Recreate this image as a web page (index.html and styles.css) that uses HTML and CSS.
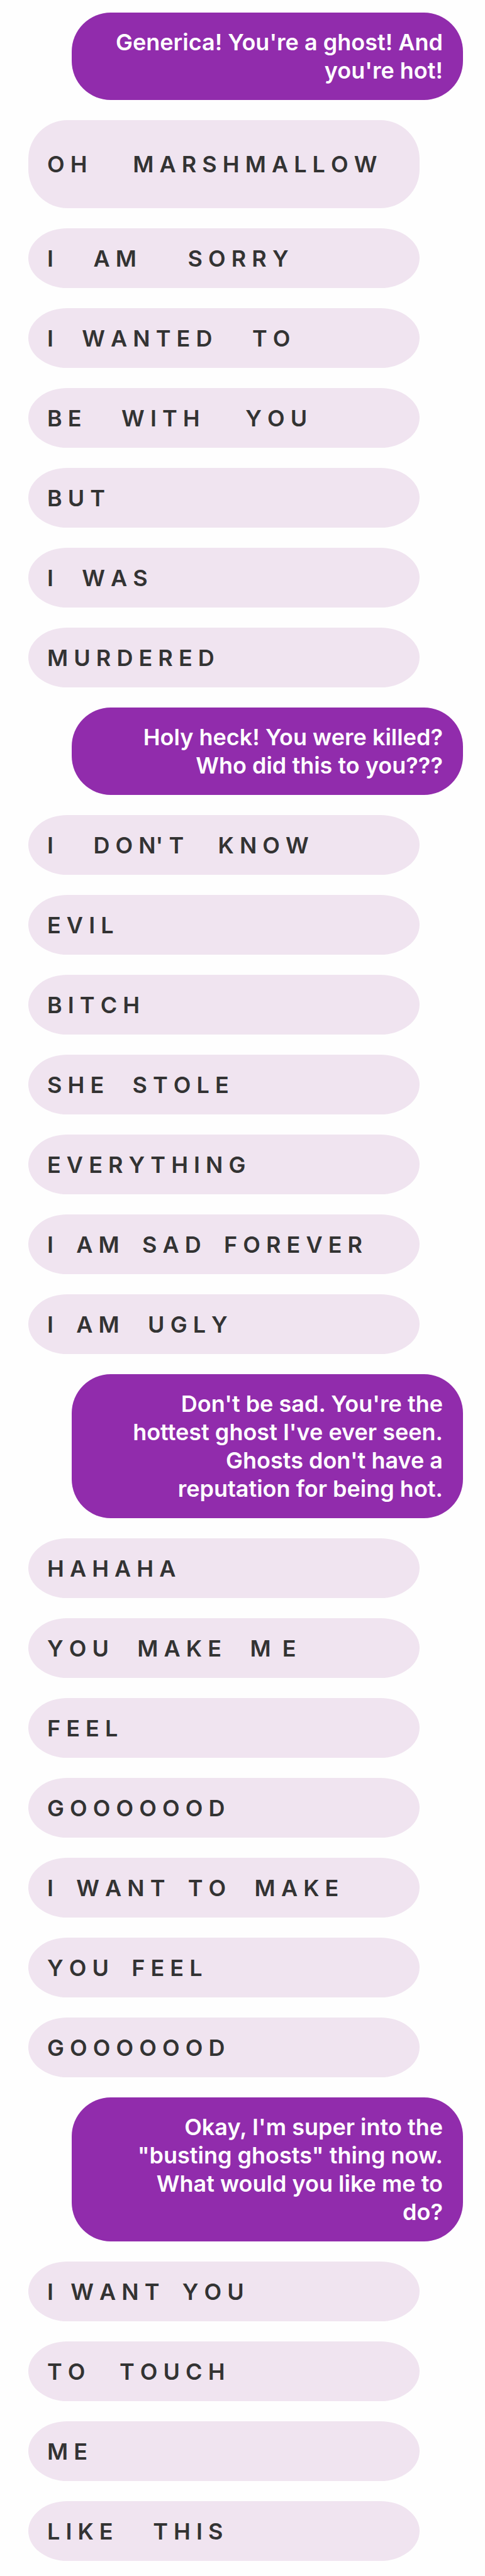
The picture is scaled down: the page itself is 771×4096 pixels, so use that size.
FILE: index.html
```html
<!DOCTYPE html>
<html lang="en">
<head>
<meta charset="utf-8">
<meta name="viewport" content="width=device-width, initial-scale=1">
<title>Chat</title>
<link rel="stylesheet" href="styles.css">
</head>
<body>
<main class="chat">
<p class="message sent">Generica! You're a ghost! And you're hot!</p>
<p class="message received tall">O H        M A R S H M A L L O W</p>
<p class="message received">I       A M         S O R R Y</p>
<p class="message received">I     W A N T E D       T O</p>
<p class="message received">B E       W I T H        Y O U</p>
<p class="message received">B U T</p>
<p class="message received">I     W A S</p>
<p class="message received">M U R D E R E D</p>
<p class="message sent">Holy heck! You were killed?<br>Who did this to you???</p>
<p class="message received">I       D O N' T      K N O W</p>
<p class="message received">E V I L</p>
<p class="message received">B I T C H</p>
<p class="message received">S H E     S T O L E</p>
<p class="message received">E V E R Y T H I N G</p>
<p class="message received">I    A M    S A D    F O R E V E R</p>
<p class="message received">I    A M     U G L Y</p>
<p class="message sent">Don't be sad. You're the<br>hottest ghost I've ever seen.<br>Ghosts don't have a<br>reputation for being hot.</p>
<p class="message received">H A H A H A</p>
<p class="message received">Y O U     M A K E     M  E</p>
<p class="message received">F E E L</p>
<p class="message received">G O O O O O O D</p>
<p class="message received">I    W A N T    T O     M A K E</p>
<p class="message received">Y O U    F E E L</p>
<p class="message received">G O O O O O O D</p>
<p class="message sent">Okay, I'm super into the<br>"busting ghosts" thing now.<br>What would you like me to<br>do?</p>
<p class="message received">I   W A N T    Y O U</p>
<p class="message received">T O      T O U C H</p>
<p class="message received">M E</p>
<p class="message received">L I K E       T H I S</p>
</main>
</body>
</html>
```

FILE: styles.css
```css
body {
  margin: 0;
  background: #fefefe;
  font-family: Inter, "Liberation Sans", sans-serif;
  font-size: 36px;
  line-height: 45px;
  font-weight: 600;
}

.chat {
  display: flex;
  flex-direction: column;
  gap: 32px;
  padding: 20px 35px 24px 45px;
}

.message {
  box-sizing: border-box;
  width: 90%;
  margin: 0;
  border-radius: 62px / min(62px, 50%);
}

.sent {
  align-self: flex-end;
  padding: 25px 32px 24px;
  background: #912cac;
  color: #fff;
  text-align: right;
}

.received {
  align-self: flex-start;
  padding: 26px 30px 24px;
  background: #f0e4f0;
  color: #333;
  white-space: pre;
}

.tall {
  padding-top: 48px;
  padding-bottom: 47px;
}
```
